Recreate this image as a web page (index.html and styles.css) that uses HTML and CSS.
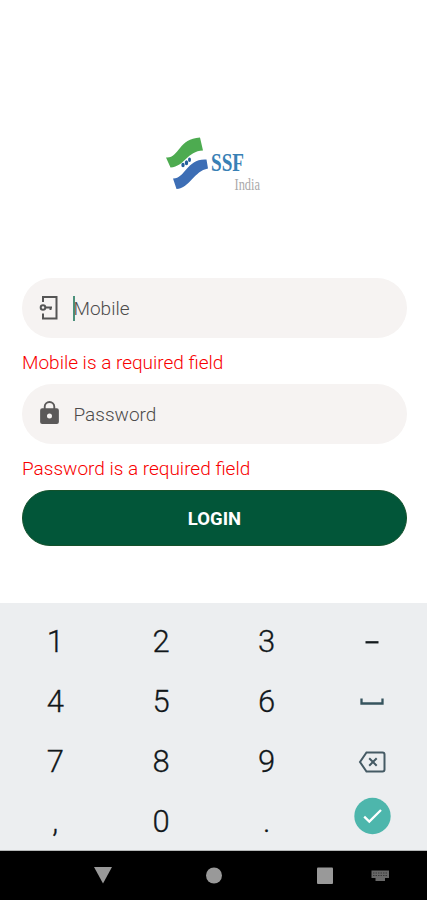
FILE: index.html
```html
<!DOCTYPE html>
<html lang="en">
<head>
<meta charset="utf-8">
<title>SSF India</title>
<link rel="stylesheet" href="styles.css">
</head>
<body>
<main class="login">
  <svg class="logo" viewBox="0 0 115 70" role="img" aria-label="SSF India">
    <path class="flag-green" d="M11 27.500C24 29 23 8.500 45 7.500L48 20.500C32 21 30 36.500 15.500 37.500Z"/>
    <path class="flag-blue" d="M18 48.500C30 49 32 28 51.500 29.500L53 38.500C39 41 35 58 21.500 59Z"/>
    <g class="flag-dots"><ellipse cx="28" cy="35" rx="1.700" ry="2.300"/><ellipse cx="31.500" cy="32.700" rx="1.700" ry="2.500"/><ellipse cx="34.500" cy="29.800" rx="1.500" ry="2.200"/></g>
    <text class="logo-name" x="56" y="41" textLength="33" lengthAdjust="spacingAndGlyphs">SSF</text>
    <text class="logo-country" x="79.500" y="59.500" textLength="25.500" lengthAdjust="spacingAndGlyphs">India</text>
  </svg>
  <form class="form">
    <div class="field">
      <svg class="icon-entry" viewBox="0 0 18 26"><path d="M3 7V2H16.500V23.500H3V18.500"/><circle cx="3" cy="12.500" r="2.300"/><path d="M5.300 12.500H12M10.500 12.500V15"/></svg>
      <span class="caret"></span><span class="hint hint-mobile">Mobile</span>
    </div>
    <p class="error error-mobile">Mobile is a required field</p>
    <div class="field">
      <svg class="icon-lock" viewBox="0 0 18 24"><path fill-rule="evenodd" d="M2 8H3.500V6.500a5.500 5.500 0 0 1 11 0V8H16a2 2 0 0 1 2 2V21a2 2 0 0 1-2 2H2a2 2 0 0 1-2-2V10a2 2 0 0 1 2-2ZM5.300 8H12.700V6.500a3.700 3.700 0 0 0-7.400 0ZM9 13a2.400 2.400 0 1 0 0 4.800 2.400 2.400 0 0 0 0-4.800Z"/></svg>
      <span class="hint hint-password">Password</span>
    </div>
    <p class="error error-password">Password is a required field</p>
    <button class="submit" type="button">LOGIN</button>
  </form>
</main>
<section class="keypad">
  <span class="key">1</span><span class="key">2</span><span class="key">3</span>
  <span class="key key-icon"><svg class="glyph" viewBox="0 0 40 40"><path class="dash" d="M13.500 20.300H26.500"/></svg></span>
  <span class="key">4</span><span class="key">5</span><span class="key">6</span>
  <span class="key key-icon"><svg class="glyph" viewBox="0 0 40 40"><path class="space" d="M9.500 16.500V21.500H30.500V16.500"/></svg></span>
  <span class="key">7</span><span class="key">8</span><span class="key">9</span>
  <span class="key key-icon"><svg class="glyph" viewBox="0 0 40 40"><path class="erase" d="M14.500 10.500H30.500Q32.500 10.500 32.500 12.500V27.500Q32.500 29.500 30.500 29.500H14.500L8 20Z"/><path class="erase-x" d="M17.200 16.200L24.700 23.700M24.700 16.200L17.200 23.700"/></svg></span>
  <span class="key">,</span><span class="key">0</span><span class="key">.</span>
  <span class="key key-icon key-done"><svg class="glyph" viewBox="0 0 40 40"><circle class="done" cx="20.500" cy="20" r="18.200"/><path class="tick" d="M12.200 20.700L17.300 25.600L29 14"/></svg></span>
</section>
<nav class="navbar">
  <svg viewBox="0 0 427 49"><path d="M94 16H112L103 32.500Z"/><circle cx="214" cy="24.500" r="8"/><rect x="317" y="16.500" width="16" height="16.500" rx="1"/>
  <g class="ime"><path d="M371.500 19.500H389V27H371.500Z"/><path d="M375.500 27H385V30H375.500Z"/><path class="ime-keys" d="M373 22H388M373 24.500H388"/></g></svg>
</nav>
</body>
</html>
```
FILE: styles.css
```css
* { box-sizing: border-box; }
body {
  margin: 0;
  width: 427px;
  height: 900px;
  display: flex;
  flex-direction: column;
  overflow: hidden;
  background: #fff;
  font-family: Roboto, sans-serif;
}
svg { display: block; flex: none; }
.login { height: 603px; padding: 130px 20px 0 22px; }
.logo { width: 115px; height: 70px; margin-left: 133px; }
.flag-green { fill: #4dab50; }
.flag-blue { fill: #3d6eb5; }
.flag-dots { fill: #245f9b; }
.logo-name { font: bold 25px "Liberation Serif", serif; fill: #3880b5; }
.logo-country { font: 17px "Liberation Serif", serif; fill: #aaa; }
.form { margin-top: 78px; }
.field {
  display: flex;
  align-items: center;
  height: 60px;
  padding-left: 18px;
  border-radius: 30px;
  background: #f6f3f2;
}
.icon-entry { width: 18px; height: 26px; margin: 0 15px 1px 0; fill: none; stroke: #555; stroke-width: 2; overflow: visible; }
.icon-lock { width: 19px; height: 25px; margin: 0 14px 4px 0; fill: #5b5959; }
.caret { width: 2px; height: 25px; margin-right: -2px; background: #4b907b; }
.hint { padding: 1px 0 0 0.5px; font-size: 19px; font-weight: 300; color: #4d4b4b; white-space: nowrap; }
.error { height: 46px; margin: 0; line-height: 49px; font-size: 19px; font-weight: 300; color: #f80000; white-space: nowrap; }
.submit {
  display: block;
  width: 100%;
  height: 56px;
  padding: 2px 0 0;
  border: 1px solid #14512b;
  border-radius: 28px;
  background: #025639;
  color: #fff;
  font: bold 18.500px Roboto, sans-serif;
}
.keypad {
  display: grid;
  grid-template-columns: repeat(4, 105.7px);
  grid-template-rows: repeat(4, 60px);
  height: 248px;
  padding: 9px 2px 0;
  background: #eceef0;
  border-bottom: 1px solid #b5b7b8;
}
.key {
  display: flex;
  align-items: center;
  justify-content: center;
  padding: 0 0 2px 1px;
  font-size: 31px;
  font-weight: 300;
  color: #11171a;
  -webkit-text-stroke: 0.3px #11171a;
}
.key-icon { padding: 0; }
.glyph { width: 40px; height: 40px; }
.key-done { padding-bottom: 13px; }
.dash, .space, .erase, .erase-x, .tick { fill: none; stroke: #151b1e; stroke-width: 2.300; }
.space { stroke: #36545e; }
.erase, .erase-x { stroke: #455a64; stroke-width: 2; }
.done { fill: #4db6ac; }
.tick { stroke: #fff; }
.navbar { height: 49px; background: #000; }
.navbar svg { width: 427px; height: 49px; fill: #999; }
.ime { fill: #686868; }
.ime-keys { stroke: #393939; stroke-width: 1; stroke-dasharray: 1.500 1; }
```
